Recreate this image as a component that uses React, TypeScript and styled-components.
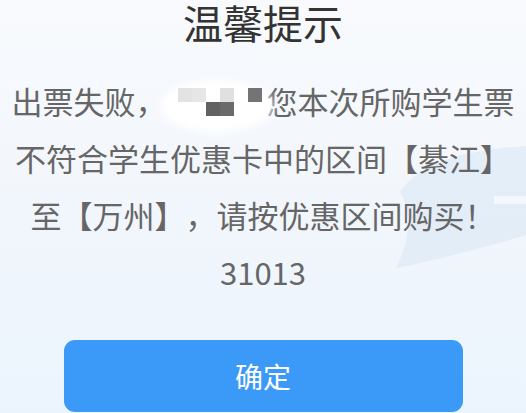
import styled, { createGlobalStyle } from 'styled-components';

const GlobalStyle = createGlobalStyle`
  html, body {
    margin: 0;
    padding: 0;
  }
  body {
    font-family: "Noto Sans CJK SC", "Noto Sans", sans-serif;
    background: #f3f7fc;
  }
`;

const Dialog = styled.div`
  position: relative;
  width: 526px;
  height: 413px;
  overflow: hidden;
  display: flex;
  flex-direction: column;
  align-items: center;
  background: linear-gradient(180deg, #f8fafd 0%, #f1f6fc 55%, #ebf4fd 100%);
`;

const Watermark = styled.svg`
  position: absolute;
  right: 0;
  top: 140px;
  width: 140px;
  height: 140px;
  pointer-events: none;
`;

const Title = styled.h1`
  position: relative;
  margin: 0;
  font-size: 40px;
  line-height: 44px;
  font-weight: 400;
  color: #333;
`;

const Message = styled.div`
  position: relative;
  margin-top: 28px;
  width: 100%;
  text-align: center;
  font-size: 31px;
  line-height: 57px;
  color: #666;
  text-spacing-trim: space-all;
`;

const Line = styled.div`
  white-space: nowrap;
`;

const Redacted = styled.span`
  display: inline-block;
  position: relative;
  width: 100px;
  height: 40px;
  vertical-align: middle;
  border-radius: 50%;
  background: #fff;
  box-shadow: 0 0 10px 6px #fff;
`;

const Mosaic = styled.span`
  position: absolute;
  left: 11px;
  top: 2px;
  display: grid;
  grid-template-columns: repeat(6, 14px);
  grid-template-rows: repeat(2, 14px);
`;

const Cell = styled.span<{ $shade?: string }>`
  background: ${p => p.$shade || 'transparent'};
`;

const ConfirmButton = styled.button`
  position: relative;
  margin-top: 40px;
  width: 399px;
  height: 72px;
  border: none;
  border-radius: 11px;
  background: #3b9af8;
  color: #fff;
  font-family: "Noto Sans CJK SC", "Noto Sans", sans-serif;
  font-size: 28px;
  cursor: pointer;
`;

// mosaic blocks covering the passenger name
const mosaic = [
  '#e3e3e3', '#e6e6e6', '', '#e0e0e0', '', '#747474',
  '', '', '#626262', '#6a6a6a', '', '',
];

export default function App() {
  return (
    <>
      <GlobalStyle />
      <Dialog>
        <Watermark viewBox="0 0 140 140">
          <path
            d="M14 52 C 34 22, 80 10, 140 6 L 140 95 C 96 108, 52 120, 10 128 C 22 104, 28 76, 14 52 Z"
            fill="#dde9f6"
            opacity="0.7"
          />
          <rect x="108" y="56" width="32" height="8" fill="#f4f8fd" />
        </Watermark>
        <Title>温馨提示</Title>
        <Message>
          <Line>
            出票失败，
            <Redacted>
              <Mosaic>
                {mosaic.map((shade, i) => (
                  <Cell key={i} $shade={shade} />
                ))}
              </Mosaic>
            </Redacted>
            您本次所购学生票
          </Line>
          <Line>不符合学生优惠卡中的区间【綦江】</Line>
          <Line>至【万州】，请按优惠区间购买！</Line>
          <Line>31013</Line>
        </Message>
        <ConfirmButton>确定</ConfirmButton>
      </Dialog>
    </>
  );
}
